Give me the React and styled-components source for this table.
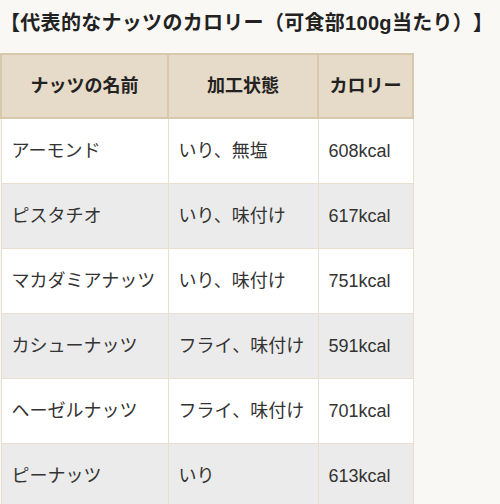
import styled, { createGlobalStyle } from "styled-components"

const GlobalStyle = createGlobalStyle`
    body {
        margin: 0;
        background-color: #faf8f4;
        font-family: "Liberation Sans", "Noto Sans CJK JP", sans-serif;
        color: #333;
    }
`

const Page = styled.div`
    width: 500px;
    height: 504px;
    overflow: hidden;
`

const Title = styled.h3`
    margin: 0;
    padding-top: 8px;
    height: 53px;
    box-sizing: border-box;
    font-size: 20px;
    font-weight: 700;
    line-height: 30px;
    color: #222;
    white-space: nowrap;
    text-spacing-trim: space-all;
    letter-spacing: 0.3px;
`

const Table = styled.table`
    border-collapse: collapse;
    table-layout: fixed;
    width: 412px;
    font-size: 18px;
    line-height: 24px;
`

const HeadCell = styled.th`
    background-color: #e6dac8;
    border: 2px solid #d8c8ac;
    height: 64px;
    padding: 0 10px;
    font-weight: 700;
    text-align: center;
    color: #222;
    width: ${props => props.$w}px;
    box-sizing: border-box;
`

const Row = styled.tr`
    background-color: ${props => (props.$striped ? "#ebebeb" : "#fff")};
`

const Cell = styled.td`
    border: 1px solid #e8dfd0;
    height: 65px;
    padding: 0 10px;
    white-space: nowrap;
    box-sizing: border-box;
`

const nuts = [
    ["アーモンド", "いり、無塩", "608kcal"],
    ["ピスタチオ", "いり、味付け", "617kcal"],
    ["マカダミアナッツ", "いり、味付け", "751kcal"],
    ["カシューナッツ", "フライ、味付け", "591kcal"],
    ["ヘーゼルナッツ", "フライ、味付け", "701kcal"],
    ["ピーナッツ", "いり", "613kcal"],
]

function App() {
    return (
        <Page>
            <GlobalStyle />
            <Title>【代表的なナッツのカロリー（可食部100g当たり）】</Title>
            <Table>
                <thead>
                    <tr>
                        <HeadCell $w={167}>ナッツの名前</HeadCell>
                        <HeadCell $w={150}>加工状態</HeadCell>
                        <HeadCell $w={95}>カロリー</HeadCell>
                    </tr>
                </thead>
                <tbody>
                    {nuts.map((n, i) => (
                        <Row key={n[0]} $striped={i % 2 === 1}>
                            <Cell>{n[0]}</Cell>
                            <Cell>{n[1]}</Cell>
                            <Cell>{n[2]}</Cell>
                        </Row>
                    ))}
                </tbody>
            </Table>
        </Page>
    )
}

export default App
